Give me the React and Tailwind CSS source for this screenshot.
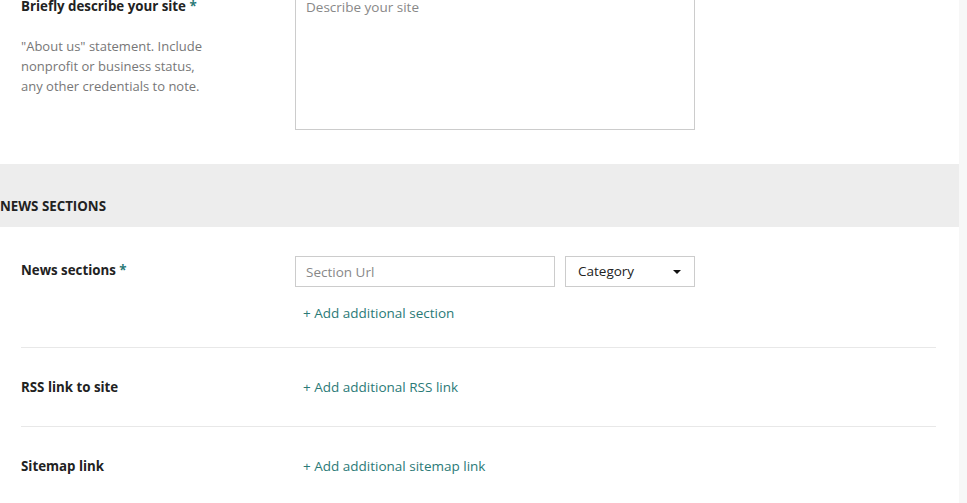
export default function App() {
  const font = { fontFamily: '"Open Sans", "Liberation Sans", sans-serif' };
  return (
    <div className="flex min-h-screen overflow-hidden bg-[#f7f7f7] text-[13.3px] text-[#222]" style={font}>
      <div className="w-[959px] shrink-0 bg-white">
        <div className="-mt-[14px]">
          {/* site description */}
          <div className="flex px-[21px] pb-[34px]">
            <div className="w-[274px] shrink-0 pt-[10px]">
              <div className="font-bold leading-[20px] text-[#222]">
                Briefly describe your site <span className="text-[#2b7a77]">*</span>
              </div>
              <p className="mt-[20px] w-[186px] text-[13px] leading-[20px] text-[#777]">
                "About us" statement. Include nonprofit or business status, any other credentials to note.
              </p>
            </div>
            <textarea
              placeholder="Describe your site"
              className="h-[144px] w-[400px] resize-none border border-[#ccc] px-[10px] py-[10px] text-[13.5px] leading-[20px] text-[#222] outline-none placeholder:text-[#888]"
            />
          </div>
        </div>

        {/* section band */}
        <div className="h-[63px] bg-[#ededed] pt-[32px]">
          <div className="text-[13.3px] font-bold uppercase leading-[20px] text-[#222]">News sections</div>
        </div>

        {/* news sections */}
        <div className="flex px-[21px] pt-[29px] pb-[24px]">
          <div className="w-[274px] shrink-0 pt-[4px] font-bold leading-[20px]">
            News sections <span className="text-[#2b7a77]">*</span>
          </div>
          <div>
            <div className="flex gap-[10px]">
              <input
                placeholder="Section Url"
                className="h-[31px] w-[260px] border border-[#ccc] px-[10px] text-[13.5px] outline-none placeholder:text-[#888]"
              />
              <div className="flex h-[31px] w-[130px] items-center justify-between border border-[#ccc] pl-[12px] pr-[13px] text-[13.5px] text-[#222]">
                <span>Category</span>
                <svg width="8" height="4" viewBox="0 0 8 4">
                  <path d="M0 0h8L4 4z" fill="#111" />
                </svg>
              </div>
            </div>
            <button className="mt-[16px] block pl-[8px] text-[13.5px] leading-[20px] text-[#2b7a77]">
              + Add additional section
            </button>
          </div>
        </div>
        <div className="ml-[21px] mr-[23px] border-t border-[#e8e8e8]" />

        {/* rss */}
        <div className="flex px-[21px] py-[29px]">
          <div className="w-[274px] shrink-0 font-bold leading-[20px]">RSS link to site</div>
          <button className="pl-[8px] text-[13.5px] leading-[20px] text-[#2b7a77]">+ Add additional RSS link</button>
        </div>
        <div className="ml-[21px] mr-[23px] border-t border-[#e8e8e8]" />

        {/* sitemap */}
        <div className="flex px-[21px] py-[29px]">
          <div className="w-[274px] shrink-0 font-bold leading-[20px]">Sitemap link</div>
          <button className="pl-[8px] text-[13.5px] leading-[20px] text-[#2b7a77]">+ Add additional sitemap link</button>
        </div>
      </div>
      <div className="flex-1" />
    </div>
  );
}
